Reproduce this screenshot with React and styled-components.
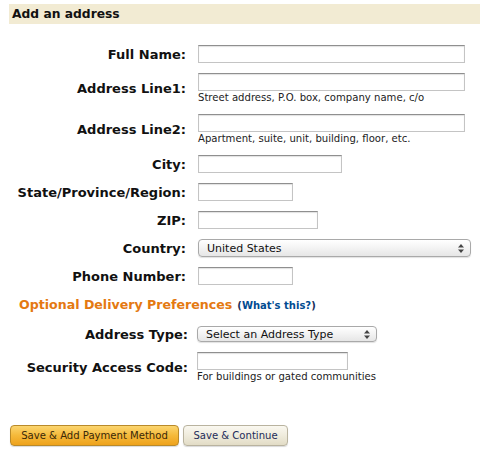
import React from 'react'
import styled, { createGlobalStyle } from 'styled-components'

const GlobalStyle = createGlobalStyle`
  body {
    margin: 0;
    background: #fff;
    font-family: 'DejaVu Sans', Verdana, sans-serif;
    color: #000;
  }
`

const Page = styled.div`
  width: 480px;
  height: 461px;
  overflow: hidden;
  padding-top: 4px;
  box-sizing: border-box;
`

const HeaderBand = styled.h2`
  margin: 0 0 21px 9px;
  height: 20px;
  padding-left: 3px;
  background: #f2ebd3;
  font-size: 12.3px;
  font-weight: bold;
  line-height: 20px;
  color: #111;
`

const Form = styled.div`
  display: grid;
  grid-template-columns: ${(p) => p.labelWidth}px auto;
  column-gap: ${(p) => p.gap}px;
  row-gap: 10px;
  align-items: center;
  justify-items: start;
`

const Label = styled.label`
  justify-self: end;
  font-size: 13px;
  font-weight: bold;
  color: #111;
  white-space: nowrap;
`

const Field = styled.div`
  display: flex;
  flex-direction: column;
`

const TextBox = styled.div`
  width: ${(p) => p.w}px;
  height: 18px;
  box-sizing: border-box;
  background: #fff;
  border: 1px solid #c4c4c4;
  border-top-color: #8f8f8f;
  box-shadow: inset 0 1px 1px rgba(0, 0, 0, 0.12);
`

const Hint = styled.div`
  margin-top: 1px;
  font-size: 10.1px;
  line-height: 12px;
  color: #222;
  white-space: nowrap;
`

const SelectBox = styled.div`
  width: ${(p) => p.w}px;
  height: ${(p) => p.h}px;
  box-sizing: border-box;
  display: flex;
  align-items: center;
  justify-content: space-between;
  padding: 0 6px 0 8px;
  border: 1px solid #a9a9a9;
  border-radius: 4px;
  background: linear-gradient(#ffffff, #f3f3f3 50%, #e6e6e6);
  box-shadow: 0 1px 1px rgba(0, 0, 0, 0.12);
  font-size: 11px;
  color: #111;
`

const Section = styled.div`
  margin: 0;
`

const OptionalHeading = styled.div`
  margin: 12px 0 14px 19px;
  font-size: 12.6px;
  font-weight: bold;
  color: #e47911;
`

const Paren = styled.span`
  font-size: 10px;
  color: #1a2f5a;
  margin-left: 5px;
`

const WhatsThis = styled.a`
  color: #004b91;
  text-decoration: none;
`

const Buttons = styled.div`
  display: flex;
  gap: 4px;
  margin: 42px 0 0 10px;
`

const Button = styled.button`
  width: ${(p) => p.w}px;
  height: 21px;
  padding: 0;
  border-radius: 4px;
  font-family: 'DejaVu Sans Condensed', 'Liberation Sans', sans-serif;
  font-size: 11.2px;
  cursor: pointer;
  border: 1px solid ${(p) => (p.primary ? '#b98a2a' : '#b9b39f')};
  background: ${(p) =>
    p.primary
      ? 'linear-gradient(#fbd56f, #f5b93a 50%, #eea21c)'
      : 'linear-gradient(#faf8f0, #efebdc 50%, #e2dcc6)'};
  color: ${(p) => (p.primary ? '#3a2808' : '#1d2c59')};
  box-shadow: 0 1px 1px rgba(0, 0, 0, 0.15);
`

const Arrows = () => (
  <svg width="6" height="9" viewBox="0 0 6 9">
    <path d="M3 0 L6 3.5 H0 Z" fill="#444" />
    <path d="M3 9 L6 5.5 H0 Z" fill="#444" />
  </svg>
)

const rows = [
  { label: 'Full Name:', w: 267 },
  { label: 'Address Line1:', w: 267, hint: 'Street address, P.O. box, company name, c/o' },
  { label: 'Address Line2:', w: 267, hint: 'Apartment, suite, unit, building, floor, etc.' },
  { label: 'City:', w: 144 },
  { label: 'State/Province/Region:', w: 95 },
  { label: 'ZIP:', w: 120 },
]

export default function App() {
  return (
    <Page>
      <GlobalStyle />
      <HeaderBand>Add an address</HeaderBand>
      <Form labelWidth={186} gap={12}>
        {rows.map((r) => (
          <React.Fragment key={r.label}>
            <Label>{r.label}</Label>
            <Field>
              <TextBox w={r.w} />
              {r.hint && <Hint>{r.hint}</Hint>}
            </Field>
          </React.Fragment>
        ))}
        <Label>Country:</Label>
        <SelectBox w={273} h={18}>
          <span>United States</span>
          <Arrows />
        </SelectBox>
        <Label>Phone Number:</Label>
        <TextBox w={95} />
      </Form>
      <Section>
        <OptionalHeading>
          Optional Delivery Preferences
          <Paren>
            (<WhatsThis href="#">What's this?</WhatsThis>)
          </Paren>
        </OptionalHeading>
        <Form labelWidth={188} gap={9}>
          <Label>Address Type:</Label>
          <SelectBox w={180} h={16}>
            <span>Select an Address Type</span>
            <Arrows />
          </SelectBox>
          <Label>Security Access Code:</Label>
          <Field>
            <TextBox w={151} />
            <Hint>For buildings or gated communities</Hint>
          </Field>
        </Form>
      </Section>
      <Buttons>
        <Button primary w={169}>Save &amp; Add Payment Method</Button>
        <Button w={105}>Save &amp; Continue</Button>
      </Buttons>
    </Page>
  )
}
